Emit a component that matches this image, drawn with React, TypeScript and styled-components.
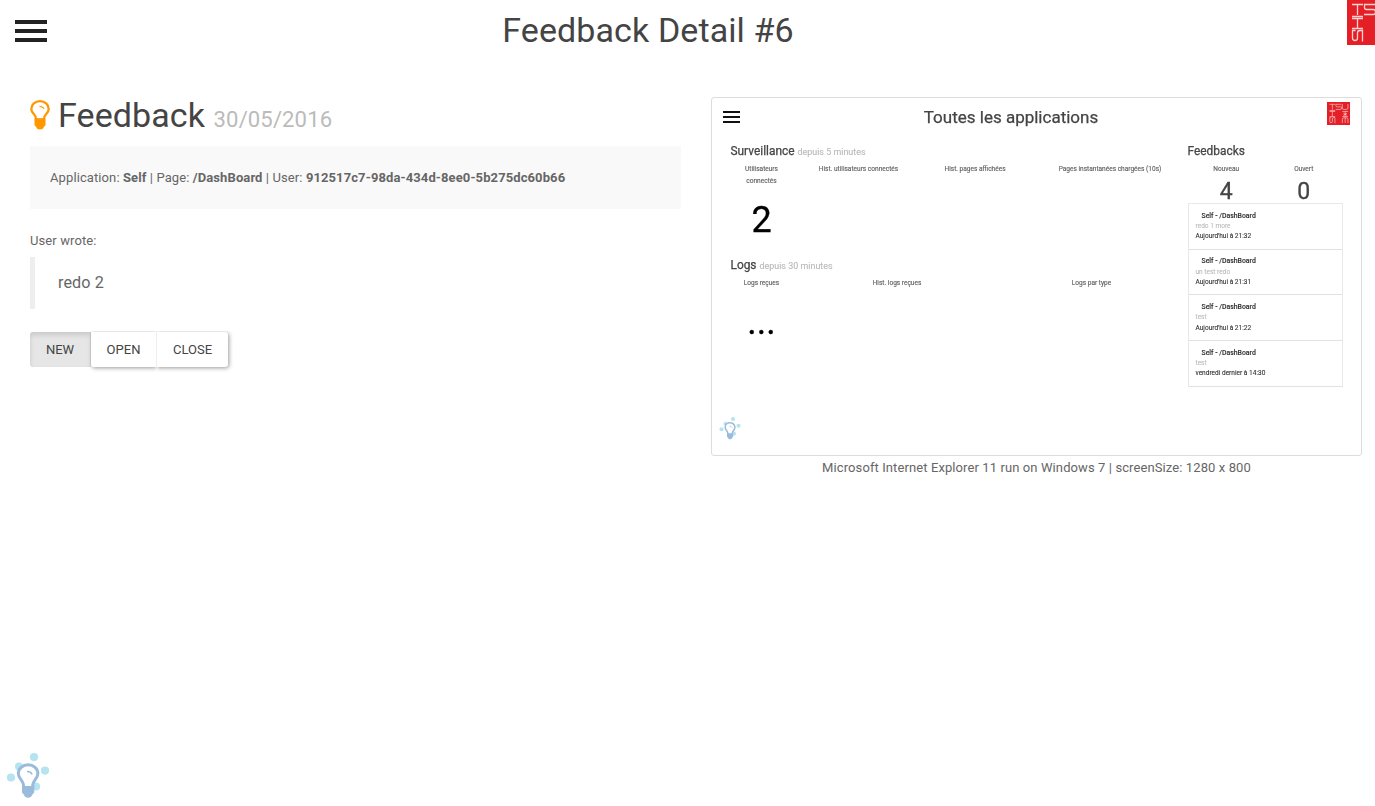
import React from "react";
import styled, { createGlobalStyle } from "styled-components";

const GlobalStyle = createGlobalStyle`
  * { box-sizing: border-box; }
  body {
    margin: 0;
    background: #fff;
    color: #666;
    font: 13px/24px Roboto, "Liberation Sans", sans-serif;
    letter-spacing: 0.1px;
    overflow: hidden;
  }
`;

const Page = styled.div`
  display: flex;
  flex-direction: column;
  height: 806px;
  overflow: hidden;
`;

const Header = styled.header`
  display: grid;
  grid-template-columns: 62px 1172px 1fr;
  height: 97px;
`;

const MenuButton = styled.button`
  display: flex;
  flex-direction: column;
  gap: 5px;
  margin: 20px 0 0 15px;
  padding: 0;
  width: 32px;
  height: 22px;
  border: 0;
  background: none;
`;

const Bar = styled.span`
  height: 4px;
  background: #222;
`;

const PageTitle = styled.h1`
  margin: 10px 0 0;
  color: #444;
  font-size: 34px;
  font-weight: 400;
  line-height: 40px;
  letter-spacing: 0.1px;
  text-align: center;
`;

const LogoSlot = styled.div`
  justify-self: end;
  width: 28px;
  height: 45px;
  overflow: hidden;
`;

const Columns = styled.main`
  display: grid;
  grid-template-columns: 651px 651px;
  column-gap: 30px;
  padding-left: 30px;
  flex: 1;
`;

const Heading = styled.h2`
  display: flex;
  align-items: baseline;
  margin: -2px 0 0;
  height: 51px;
  color: #444;
  font-size: 34px;
  font-weight: 400;
  line-height: 40px;
  svg { align-self: flex-start; margin: 5px 8px 0 0; }
`;

const HeadingDate = styled.small`
  margin-left: 8.5px;
  color: #bbb;
  font-size: 22.1px;
`;

const Well = styled.div`
  height: 63px;
  padding: 20px;
  background: #f9f9f9;
  b { font-weight: 700; }
`;

const Wrote = styled.p`
  margin: 20px 0 4px;
`;

const Quote = styled.blockquote`
  margin: 0 0 23px;
  height: 52px;
  padding: 11px 23px;
  border-left: 5px solid #eee;
  font-size: 16.2px;
  line-height: 30px;
`;

const ButtonGroup = styled.div`
  display: flex;
  height: 35px;
`;

const StatusButton = styled.button<{ $active?: boolean; $width: number; $last?: boolean }>`
  width: ${(p) => p.$width}px;
  padding: 0;
  padding-right: ${(p) => (p.$active ? 1 : 0)}px;
  border: 0;
  border-left: ${(p) => (p.$last ? "1px solid #eee" : "0")};
  border-radius: ${(p) => (p.$active ? "3px 0 0 3px" : p.$last ? "0 3px 3px 0" : "0 0 0 3px")};
  background: ${(p) => (p.$active ? "#e6e6e6" : "#fff")};
  box-shadow: ${(p) =>
    p.$active ? "inset 0 3px 5px rgba(0,0,0,.125)" : "1px 1px 4px rgba(0,0,0,.4)"};
  clip-path: ${(p) => (p.$last ? "inset(-1px -6px -6px 0)" : p.$active ? "none" : "inset(-1px 0 -6px -1px)")};
  color: #444;
  font: 13px Roboto, sans-serif;
  letter-spacing: 0;
  text-transform: uppercase;
`;

const Thumbnail = styled.section`
  height: 359px;
  padding: 4px 18px 0 18.5px;
  border: 1px solid #ddd;
  border-radius: 3px;
  overflow: hidden;
`;

const Shot = styled.div`
  display: flex;
  flex-direction: column;
  height: 350px;
  letter-spacing: 0;
  filter: blur(0.5px);
`;

const ShotHeader = styled.div`
  display: grid;
  grid-template-columns: 17px 1fr 23px;
  height: 42px;
  margin: 0 -7px 0 -7.5px;
`;

const ShotMenu = styled.div`
  display: flex;
  flex-direction: column;
  gap: 3px;
  padding-top: 9px;
  span { height: 2px; background: #111; }
`;

const ShotTitle = styled.div`
  padding-top: 4px;
  padding-right: 45px;
  color: #444;
  font-size: 17px;
  line-height: 22px;
  text-align: center;
  -webkit-text-stroke: 0.25px #444;
`;

const ShotBody = styled.div`
  display: grid;
  grid-template-columns: 457px 155px;
  height: 273px;
`;

const ShotHeading = styled.div`
  height: 19px;
  color: #444;
  font-size: 11.9px;
  line-height: 14px;
  white-space: nowrap;
  -webkit-text-stroke: 0.25px currentColor;
  small { color: #bbb; font-size: 8.95px; -webkit-text-stroke: 0.15px #bbb; }
`;

const Cells = styled.div<{ $height: number }>`
  display: flex;
  height: ${(p) => p.$height}px;
`;

const Cell = styled.div<{ $width: number; $offset?: number }>`
  width: ${(p) => p.$width}px;
  margin-left: ${(p) => p.$offset ?? 0}px;
  font-size: 6.55px;
  line-height: 12px;
  text-align: center;
  -webkit-text-stroke: 0.15px currentColor;
`;

const Figure = styled.div<{ $size: number; $top: number; $color: string }>`
  margin-top: ${(p) => p.$top}px;
  color: ${(p) => p.$color};
  font-size: ${(p) => p.$size}px;
  line-height: 1;
  -webkit-text-stroke: 0.3px currentColor;
`;

const Feed = styled.div`
  border: 1px solid #e8e8e8;
  border-bottom: 0;
`;

const FeedItem = styled.div`
  height: 45.7px;
  padding: 6.7px 7px 0;
  border-bottom: 1px solid #e2e2e2;
  color: #333;
  font-size: 6.55px;
  line-height: 10.3px;
  -webkit-text-stroke: 0.1px currentColor;
`;

const FeedTitle = styled.div`
  padding-left: 6px;
  font-size: 6.9px;
  font-weight: 500;
`;

const FeedNote = styled.div`
  color: #bbb;
`;

const ShotFooter = styled.div`
  margin: -0.5px 0 0 -12px;
`;

const Caption = styled.p`
  margin: 0;
  text-align: center;
`;

const Floating = styled.div`
  position: fixed;
  left: 6px;
  bottom: 7px;
  height: 46px;
`;

function Bulb() {
  return (
    <svg width="20" height="30" viewBox="0 0 20 30">
      <path d="M6 20v-1.500C6 14.500 1.300 13.500 1.300 8.900a8.700 7.700 0 0 1 17.400 0c0 4.600-4.700 5.600-4.700 9.600V20z" fill="none" stroke="#ff9800" strokeWidth="2.300" />
      <path d="M9.500 6.300c2.100 0 3.500.5 4.600 2.300" fill="none" stroke="#ff9800" strokeWidth="1.200" />
      <path d="M4.500 18.300h11v6.600l-1.600 2c-.6 1.700-1.900 2.500-3.900 2.500s-3.300-.8-3.900-2.500l-1.600-2z" fill="#ff9800" />
    </svg>
  );
}

function IdeaIcon({ size }: { size: number }) {
  return (
    <svg width={size} height={size} viewBox="0 0 46 46">
      <g fill="#b5e3f1">
        <circle cx="28" cy="4.100" r="4.100" />
        <circle cx="13" cy="13.600" r="4" />
        <circle cx="39" cy="17.600" r="4.100" />
        <circle cx="5" cy="24.500" r="4.100" />
        <circle cx="30" cy="33.500" r="4.100" />
      </g>
      <path d="M17.500 34.500V32c0-4-5.200-6.500-5.200-11.500a9.800 8.800 0 0 1 19.600 0c0 5-5.200 7.500-5.200 11.500v2.500z" fill="#fff" stroke="#9abbdc" strokeWidth="3" />
      <path d="M21 18.500c2.300-.1 4 .7 5.200 2.800" fill="none" stroke="#9abbdc" strokeWidth="1.500" />
      <path d="M16 33h12.200v6.500l-1.900 2.200c-.7 2-2 3-4.200 3s-3.500-1-4.200-3L16 39.500z" fill="#9abbdc" />
    </svg>
  );
}

function Logo({ size }: { size: number }) {
  return (
    <svg width={size} height={size} viewBox="0 0 45 45">
      <path d="M0 0h45v45H0z" fill="#e41f26" />
      <g fill="none" stroke="#fbd3d4" strokeWidth="1.300">
        <path d="M5 4.500h11M10.500 4.500v10.500M28 4.500H17.500v3q0 2 2 2h7q2 0 2 2.500t-2 2.500H17M30 4v8q0 2.500 3 2.500h5q3 0 3-2.500V4" />
        <path d="M5 16.500h11M5 18.500h11M10.500 18.500v10M5 28.500h11M8.500 30.500h-3v7.500q0 2.500 2.500 2.500t2.500-2.500v-5q0-2.500 2.500-2.500h2.500v11" />
        <path d="M30 18.500h11M30 28.500h11M35.500 18.500v10M32 22l7 4M39 22l-7 4M30 41v-7q0-3 3-3h5q3 0 3 3v7M35.500 31v10" />
      </g>
    </svg>
  );
}

const entries = [
  ["redo 1 more", "Aujourd'hui à 21:32"],
  ["un test redo", "Aujourd'hui à 21:31"],
  ["test", "Aujourd'hui à 21:22"],
  ["test", "vendredi dernier à 14:30"],
];

function Preview() {
  return (
    <Shot>
      <ShotHeader>
        <ShotMenu><span /><span /><span /></ShotMenu>
        <ShotTitle>Toutes les applications</ShotTitle>
        <Logo size={23} />
      </ShotHeader>
      <ShotBody>
        <div>
          <ShotHeading>Surveillance <small>depuis 5 minutes</small></ShotHeading>
          <Cells $height={95}>
            <Cell $width={62}>
              Utilisateurs connectés
              <Figure $size={36} $top={15} $color="#000">2</Figure>
            </Cell>
            <Cell $width={132}>Hist. utilisateurs connectés</Cell>
            <Cell $width={101}>Hist. pages affichées</Cell>
            <Cell $width={146} $offset={11.5}>Pages instantanées chargées (10s)</Cell>
          </Cells>
          <ShotHeading>Logs <small>depuis 30 minutes</small></ShotHeading>
          <Cells $height={79}>
            <Cell $width={62}>
              Logs reçues
              <Figure $size={36} $top={15} $color="#000">...</Figure>
            </Cell>
            <Cell $width={209}>Hist. logs reçues</Cell>
            <Cell $width={180}>Logs par type</Cell>
          </Cells>
        </div>
        <div>
          <ShotHeading>Feedbacks</ShotHeading>
          <Cells $height={40}>
            <Cell $width={77.5}>Nouveau<Figure $size={23} $top={5} $color="#444">4</Figure></Cell>
            <Cell $width={77.5}>Ouvert<Figure $size={23} $top={5} $color="#444">0</Figure></Cell>
          </Cells>
          <Feed>
            {entries.map(([note, time]) => (
              <FeedItem key={time}>
                <FeedTitle>Self - /DashBoard</FeedTitle>
                <FeedNote>{note}</FeedNote>
                <div>{time}</div>
              </FeedItem>
            ))}
          </Feed>
        </div>
      </ShotBody>
      <ShotFooter><IdeaIcon size={23} /></ShotFooter>
    </Shot>
  );
}

export default function App() {
  return (
    <Page>
      <GlobalStyle />
      <Header>
        <MenuButton aria-label="Menu"><Bar /><Bar /><Bar /></MenuButton>
        <PageTitle>Feedback Detail #6</PageTitle>
        <LogoSlot><Logo size={45} /></LogoSlot>
      </Header>
      <Columns>
        <div>
          <Heading><Bulb />Feedback <HeadingDate>30/05/2016</HeadingDate></Heading>
          <Well>
            Application: <b>Self</b> | Page: <b>/DashBoard</b> | User: <b>912517c7-98da-434d-8ee0-5b275dc60b66</b>
          </Well>
          <Wrote>User wrote:</Wrote>
          <Quote>redo 2</Quote>
          <ButtonGroup>
            <StatusButton $active $width={61}>New</StatusButton>
            <StatusButton $width={65}>Open</StatusButton>
            <StatusButton $last $width={72}>Close</StatusButton>
          </ButtonGroup>
        </div>
        <div>
          <Thumbnail><Preview /></Thumbnail>
          <Caption>Microsoft Internet Explorer 11 run on Windows 7 | screenSize: 1280 x 800</Caption>
        </div>
      </Columns>
      <Floating><IdeaIcon size={46} /></Floating>
    </Page>
  );
}
